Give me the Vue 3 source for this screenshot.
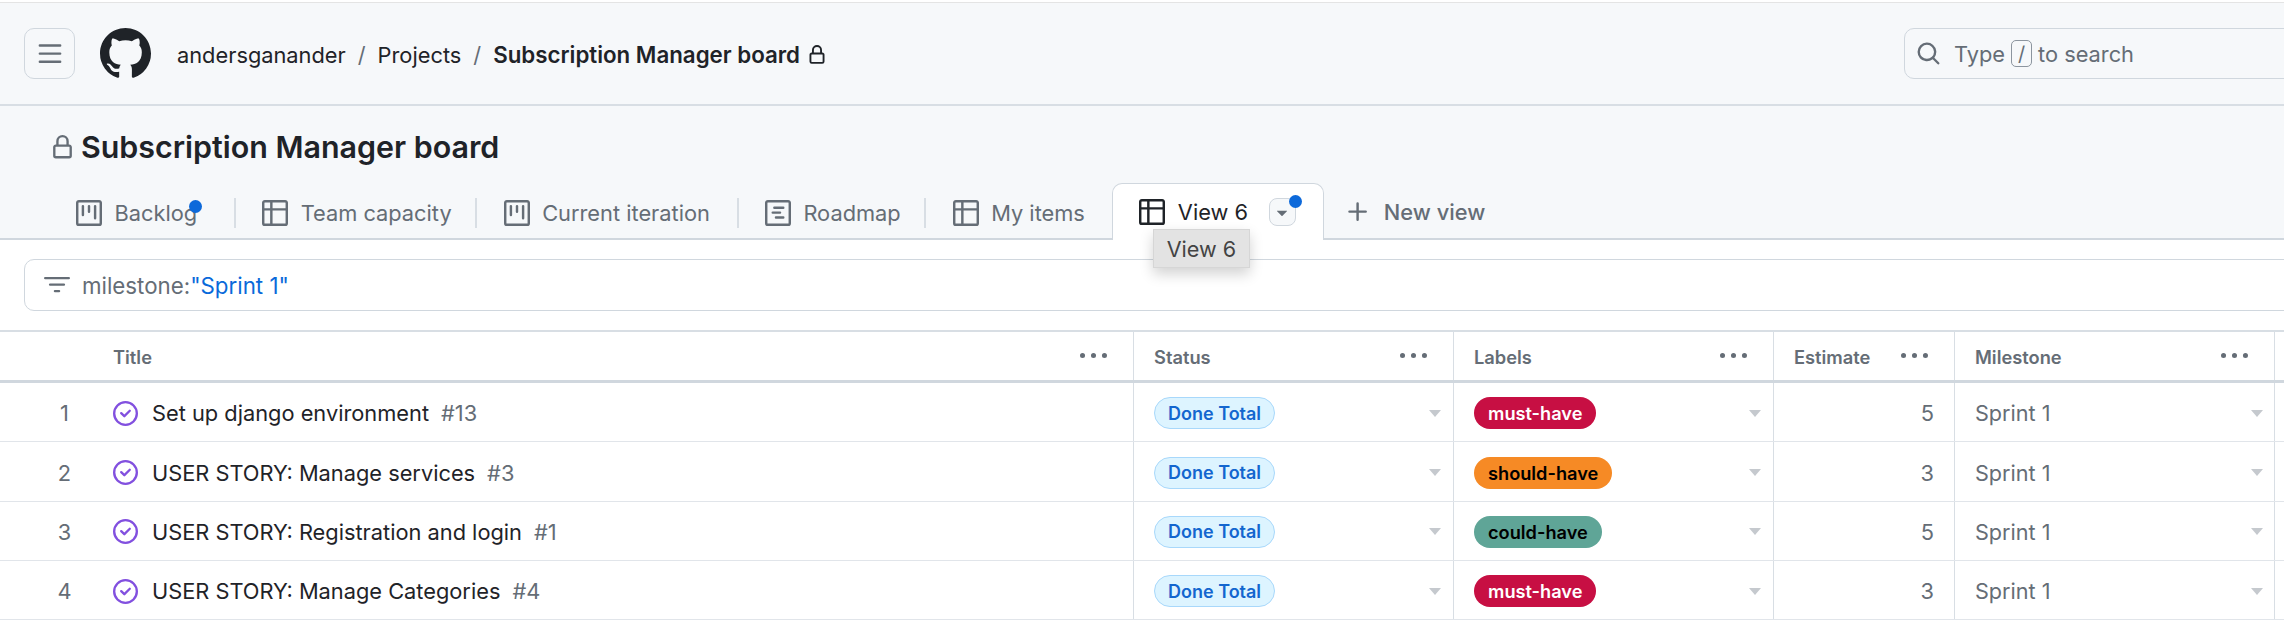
<template>
  <div class="page">
    <header class="topbar">
      <button class="menu-btn">
        <svg class="menu-icon" viewBox="0 0 16 16"><path :d="icons.bars" /></svg>
      </button>
      <svg class="logo" viewBox="0 0 16 16"><path :d="icons.github" /></svg>
      <nav class="crumbs">
        <span class="crumb-user">andersganander</span>
        <span class="slash">/</span>
        <span class="crumb-projects">Projects</span>
        <span class="slash">/</span>
        <strong class="crumb-board">Subscription Manager board</strong>
        <svg class="crumb-lock" viewBox="0 0 16 16"><path :d="icons.lock" /></svg>
      </nav>
      <div class="search">
        <svg class="search-icon" viewBox="0 0 16 16"><path :d="icons.search" /></svg>
        <span>Type</span>
        <kbd class="slash-key">/</kbd>
        <span>to search</span>
      </div>
    </header>

    <section class="project-head">
      <h1 class="project-title">
        <svg class="title-lock" viewBox="0 0 16 16"><path :d="icons.lock" /></svg>
        Subscription Manager board
      </h1>
      <div class="tabs">
        <div v-for="tab in tabs" :key="tab.name" class="tab" :class="{ dotted: tab.dot }">
          <svg class="tab-icon" viewBox="0 0 16 16"><path :d="icons[tab.icon]" /></svg>
          <span>{{ tab.name }}</span>
          <i v-if="tab.dot" class="dot backlog-dot"></i>
        </div>
        <div class="tab-active">
          <svg class="tab-icon" viewBox="0 0 16 16"><path :d="icons.table" /></svg>
          <span>View 6</span>
          <span class="view-menu">
            <svg class="view-caret" viewBox="0 0 16 16"><path :d="icons.caret" /></svg>
            <i class="dot menu-dot"></i>
          </span>
          <div class="tooltip">View 6</div>
        </div>
        <div class="new-view">
          <svg class="plus" viewBox="0 0 16 16"><path :d="icons.plus" /></svg>
          <span>New view</span>
        </div>
      </div>
    </section>

    <div class="filter-wrap">
      <div class="filter">
        <svg class="filter-icon" viewBox="0 0 16 16"><path :d="icons.filter" /></svg>
        <span>milestone:<b class="filter-value">"Sprint 1"</b></span>
      </div>
    </div>

    <div class="table">
      <div class="row head-row">
        <div v-for="col in columns" :key="col.name" class="cell head-cell" :class="col.cls">
          <span>{{ col.name }}</span>
          <svg class="kebab" viewBox="0 0 16 16"><path :d="icons.kebab" /></svg>
        </div>
        <div class="cell tail"></div>
      </div>
      <div v-for="(item, i) in items" :key="item.id" class="row">
        <div class="cell title-cell">
          <span class="num">{{ i + 1 }}</span>
          <svg class="issue-icon" viewBox="0 0 16 16"><path :d="icons.closedA" /><path :d="icons.closedB" /></svg>
          <span class="issue-title">{{ item.title }}</span>
          <span class="issue-id">#{{ item.id }}</span>
        </div>
        <div class="cell">
          <span class="pill status">Done Total</span>
          <svg class="caret" viewBox="0 0 12 7"><path d="M0 0h12L6 7z" /></svg>
        </div>
        <div class="cell">
          <span class="pill" :class="item.label">{{ item.label }}</span>
          <svg class="caret" viewBox="0 0 12 7"><path d="M0 0h12L6 7z" /></svg>
        </div>
        <div class="cell estimate">{{ item.estimate }}</div>
        <div class="cell milestone">
          <span>Sprint 1</span>
          <svg class="caret" viewBox="0 0 12 7"><path d="M0 0h12L6 7z" /></svg>
        </div>
        <div class="cell tail"></div>
      </div>
    </div>
  </div>
</template>

<script setup>
const icons = {
  bars: 'M1 2.75A.75.75 0 0 1 1.75 2h12.5a.75.75 0 0 1 0 1.5H1.75A.75.75 0 0 1 1 2.75Zm0 5A.75.75 0 0 1 1.75 7h12.5a.75.75 0 0 1 0 1.5H1.75A.75.75 0 0 1 1 7.75ZM1.75 12h12.5a.75.75 0 0 1 0 1.5H1.75a.75.75 0 0 1 0-1.5Z',
  github: 'M8 0c4.42 0 8 3.58 8 8a8.013 8.013 0 0 1-5.45 7.59c-.4.08-.55-.17-.55-.38 0-.27.01-1.13.01-2.2 0-.75-.25-1.23-.54-1.48 1.78-.2 3.65-.88 3.65-3.95 0-.88-.31-1.59-.82-2.15.08-.2.36-1.02-.08-2.12 0 0-.67-.22-2.2.82-.64-.18-1.32-.27-2-.27-.68 0-1.36.09-2 .27-1.53-1.03-2.2-.82-2.2-.82-.44 1.1-.16 1.92-.08 2.12-.51.56-.82 1.28-.82 2.15 0 3.06 1.86 3.75 3.64 3.95-.23.2-.44.55-.51 1.07-.46.21-1.61.55-2.33-.66-.15-.24-.6-.83-1.23-.82-.67.01-.27.38.01.53.34.19.73.9.82 1.13.16.45.68 1.31 2.69.94 0 .67.01 1.3.01 1.49 0 .21-.15.45-.55.38A7.995 7.995 0 0 1 0 8c0-4.42 3.58-8 8-8Z',
  lock: 'M4 4a4 4 0 0 1 8 0v2h.25c.966 0 1.75.784 1.75 1.75v5.5A1.75 1.75 0 0 1 12.25 15h-8.5A1.75 1.75 0 0 1 2 13.25v-5.5C2 6.784 2.784 6 3.75 6H4Zm8.25 3.5h-8.5a.25.25 0 0 0-.25.25v5.5c0 .138.112.25.25.25h8.5a.25.25 0 0 0 .25-.25v-5.5a.25.25 0 0 0-.25-.25ZM10.5 6V4a2.5 2.5 0 1 0-5 0v2Z',
  search: 'M10.68 11.74a6 6 0 0 1-7.922-8.982 6 6 0 0 1 8.982 7.922l3.04 3.04a.749.749 0 0 1-.326 1.275.749.749 0 0 1-.734-.215ZM11.5 7a4.499 4.499 0 1 0-8.997 0A4.499 4.499 0 0 0 11.5 7Z',
  board: 'M1.75 0h12.5C15.216 0 16 .784 16 1.75v12.5A1.75 1.75 0 0 1 14.25 16H1.75A1.75 1.75 0 0 1 0 14.25V1.75C0 .784.784 0 1.75 0ZM1.5 1.75v12.5c0 .138.112.25.25.25h12.5a.25.25 0 0 0 .25-.25V1.75a.25.25 0 0 0-.25-.25H1.75a.25.25 0 0 0-.25.25ZM11.75 3a.75.75 0 0 1 .75.75v7.5a.75.75 0 0 1-1.5 0v-7.5a.75.75 0 0 1 .75-.75Zm-8.25.75a.75.75 0 0 1 1.5 0v5.5a.75.75 0 0 1-1.5 0ZM8 3a.75.75 0 0 1 .75.75v3.5a.75.75 0 0 1-1.5 0v-3.5A.75.75 0 0 1 8 3Z',
  table: 'M0 1.75C0 .784.784 0 1.75 0h12.5C15.216 0 16 .784 16 1.75v12.5A1.75 1.75 0 0 1 14.25 16H1.75A1.75 1.75 0 0 1 0 14.25ZM6.5 6.5v8h7.75a.25.25 0 0 0 .25-.25V6.5Zm8-1.5V1.75a.25.25 0 0 0-.25-.25H6.5V5Zm-13 1.5v7.75c0 .138.112.25.25.25H5v-8ZM5 5V1.5H1.75a.25.25 0 0 0-.25.25V5Z',
  roadmap: 'M4.75 7a.75.75 0 0 0 0 1.5h4.5a.75.75 0 0 0 0-1.5h-4.5ZM5 4.75A.75.75 0 0 1 5.75 4h5.5a.75.75 0 0 1 0 1.5h-5.5A.75.75 0 0 1 5 4.75ZM6.75 10a.75.75 0 0 0 0 1.5h4.5a.75.75 0 0 0 0-1.5h-4.5ZM0 1.75C0 .784.784 0 1.75 0h12.5C15.216 0 16 .784 16 1.75v12.5A1.75 1.75 0 0 1 14.25 16H1.75A1.75 1.75 0 0 1 0 14.25ZM1.75 1.5a.25.25 0 0 0-.25.25v12.5c0 .138.112.25.25.25h12.5a.25.25 0 0 0 .25-.25V1.75a.25.25 0 0 0-.25-.25Z',
  plus: 'M7.75 2a.75.75 0 0 1 .75.75V7h4.25a.75.75 0 0 1 0 1.5H8.5v4.25a.75.75 0 0 1-1.5 0V8.5H2.75a.75.75 0 0 1 0-1.5H7V2.75A.75.75 0 0 1 7.75 2Z',
  filter: 'M.75 3h14.5a.75.75 0 0 1 0 1.5H.75a.75.75 0 0 1 0-1.5ZM3 7.75A.75.75 0 0 1 3.75 7h8.5a.75.75 0 0 1 0 1.5h-8.5A.75.75 0 0 1 3 7.75Zm3 4a.75.75 0 0 1 .75-.75h2.5a.75.75 0 0 1 0 1.5h-2.5a.75.75 0 0 1-.75-.75Z',
  closedA: 'M11.28 6.78a.75.75 0 0 0-1.06-1.06L7.25 8.69 5.78 7.22a.75.75 0 0 0-1.06 1.06l2 2a.75.75 0 0 0 1.06 0l3.5-3.5Z',
  closedB: 'M16 8A8 8 0 1 1 0 8a8 8 0 0 1 16 0Zm-1.5 0a6.5 6.5 0 1 0-13 0 6.5 6.5 0 0 0 13 0Z',
  caret: 'm4.427 7.427 3.396 3.396a.25.25 0 0 0 .354 0l3.396-3.396A.25.25 0 0 0 11.396 7H4.604a.25.25 0 0 0-.177.427Z',
  kebab: 'M8 9.5a1.5 1.5 0 1 0 0-3 1.5 1.5 0 0 0 0 3ZM1.5 9.5a1.5 1.5 0 1 0 0-3 1.5 1.5 0 0 0 0 3Zm13 0a1.5 1.5 0 1 0 0-3 1.5 1.5 0 0 0 0 3Z',
}

const tabs = [
  { name: 'Backlog', icon: 'board', dot: true },
  { name: 'Team capacity', icon: 'table' },
  { name: 'Current iteration', icon: 'board' },
  { name: 'Roadmap', icon: 'roadmap' },
  { name: 'My items', icon: 'table' },
]

const columns = [
  { name: 'Title', cls: 'title-head' },
  { name: 'Status' },
  { name: 'Labels' },
  { name: 'Estimate' },
  { name: 'Milestone' },
]

const items = [
  { id: 13, title: 'Set up django environment', label: 'must-have', estimate: 5 },
  { id: 3, title: 'USER STORY: Manage services', label: 'should-have', estimate: 3 },
  { id: 1, title: 'USER STORY: Registration and login', label: 'could-have', estimate: 5 },
  { id: 4, title: 'USER STORY: Manage Categories', label: 'must-have', estimate: 3 },
]
</script>

<style>
html,
body {
  background: #fff;
  overflow: hidden;
}
</style>

<style scoped>
.page {
  width: 2284px;
  height: 626px;
  overflow: hidden;
  font-family: Inter, "Noto Sans", sans-serif;
  color: #1f2328;
  background: #fff;
}

svg {
  display: block;
  fill: currentColor;
  flex: none;
}

.topbar {
  display: flex;
  align-items: center;
  height: 104px;
  margin-top: 2px;
  padding-left: 24px;
  box-sizing: border-box;
  background: #f6f8fa;
  border-top: 1.5px solid #e4e4e4;
  border-bottom: 2px solid #d8dee4;
}

.menu-btn {
  display: flex;
  align-items: center;
  justify-content: center;
  width: 51px;
  height: 51px;
  padding: 0;
  background: transparent;
  color: #656d76;
  border: 1.5px solid #d0d7de;
  border-radius: 10px;
}

.menu-icon {
  width: 26px;
  height: 26px;
}

.logo {
  width: 51px;
  height: 51px;
  margin-left: 25px;
  color: #1f2328;
}

.crumbs {
  display: flex;
  align-items: center;
  margin-left: 26px;
  padding-top: 2px;
  font-size: 21.8px;
  flex: 1;
}

.slash {
  margin: 0 12px;
  color: #656d76;
}

.crumb-board {
  font-size: 22.3px;
  font-weight: 600;
}

.crumb-lock {
  width: 20px;
  height: 20px;
  margin-left: 7px;
  color: #1f2328;
}

.search {
  display: flex;
  align-items: center;
  width: 400px;
  height: 51px;
  margin-right: -20px;
  padding-left: 11px;
  box-sizing: border-box;
  font-size: 21.8px;
  color: #656d76;
  border: 1.5px solid #d0d7de;
  border-radius: 10px;
}

.search-icon {
  width: 25px;
  height: 25px;
  margin-right: 13px;
}

.slash-key {
  display: flex;
  align-items: center;
  justify-content: center;
  width: 19px;
  height: 25px;
  margin: 0 6px;
  font: inherit;
  font-size: 20px;
  border: 1px solid #8c959f;
  border-radius: 5px;
}

.project-head {
  height: 134px;
  box-sizing: border-box;
  background: #f6f8fa;
  border-bottom: 2px solid #d0d7de;
}

.project-title {
  display: flex;
  align-items: center;
  margin: 0;
  height: 82px;
  padding-left: 50px;
  font-size: 30.4px;
  font-weight: 600;
  line-height: 1;
}

.title-lock {
  width: 25px;
  height: 25px;
  margin-right: 6px;
  color: #656d76;
}

.tabs {
  display: flex;
  align-items: flex-end;
  height: 50px;
  padding-left: 49px;
  font-size: 21.8px;
  color: #656d76;
}

.tab {
  position: relative;
  display: flex;
  align-items: center;
  gap: 12.5px;
  height: 30px;
  margin-bottom: 10px;
  padding: 0 27px;
  border-right: 2px solid #d8dee4;
}

.tab:nth-child(2),
.tab:nth-child(4) {
  padding-left: 26px;
  padding-right: 23px;
}

.tab:nth-child(5) {
  border-right: 0;
}

.tab.dotted {
  padding-right: 37px;
}

.tab-icon {
  width: 26px;
  height: 26px;
}

.dot {
  position: absolute;
  width: 13px;
  height: 13px;
  border-radius: 50%;
  background: #0d69da;
}

.backlog-dot {
  left: 140px;
  top: 2px;
}

.tab-active {
  position: relative;
  display: flex;
  align-items: center;
  gap: 13px;
  width: 212px;
  height: 57px;
  margin-bottom: -2px;
  padding: 0 0 0 26px;
  box-sizing: border-box;
  color: #1f2328;
  background: #fff;
  border: 1.5px solid #d0d7de;
  border-bottom: 0;
  border-radius: 10px 10px 0 0;
}

.view-menu {
  position: relative;
  display: flex;
  align-items: center;
  justify-content: center;
  width: 27px;
  height: 28px;
  margin-left: 8px;
  color: #656d76;
  background: #f6f8fa;
  border: 1.5px solid #d0d7de;
  box-sizing: border-box;
  border-radius: 8px;
}

.view-caret {
  width: 22px;
  height: 22px;
  flex: none;
}

.menu-dot {
  right: -7.5px;
  top: -4px;
}

.tooltip {
  position: absolute;
  left: 40px;
  top: 45px;
  z-index: 2;
  width: 97px;
  height: 39px;
  line-height: 38px;
  text-align: center;
  font-size: 21.6px;
  color: #434343;
  background: #e3e3e3;
  border: 1px solid #d6d6d6;
  box-sizing: border-box;
  box-shadow: 0 6px 14px rgba(0, 0, 0, 0.18);
}

.new-view {
  display: flex;
  align-items: center;
  gap: 13px;
  height: 30px;
  margin: 0 0 11px 21px;
  font-weight: 500;
}

.plus {
  width: 26px;
  height: 26px;
}

.filter-wrap {
  height: 90px;
  padding: 19px 0 0 24px;
  box-sizing: border-box;
}

.filter {
  display: flex;
  align-items: center;
  gap: 12px;
  width: 2400px;
  height: 52px;
  padding-left: 19px;
  box-sizing: border-box;
  font-size: 22.3px;
  color: #656d76;
  background: #fff;
  border: 1.5px solid #d0d7de;
  border-radius: 10px;
}

.filter-icon {
  width: 26px;
  height: 26px;
}

.filter-value {
  font-weight: 400;
  color: #0969da;
}

.table {
  border-top: 2px solid #d8dee4;
}

.row {
  display: grid;
  grid-template-columns: 1134px 320px 320px 181px 320px 1fr;
  height: 59.25px;
  box-sizing: border-box;
  border-bottom: 1.5px solid #e1e5ea;
}

.head-row {
  height: 51px;
  border-bottom: 3px solid #d0d7de;
}

.cell {
  display: flex;
  align-items: center;
  justify-content: space-between;
  min-width: 0;
  padding: 2.5px 20px 0;
  box-sizing: border-box;
  border-right: 1.5px solid #d8dee4;
}

.cell.tail {
  border-right: 0;
}

.head-cell {
  padding-top: 1px;
  padding-right: 26px;
  font-size: 18.3px;
  font-weight: 600;
  color: #656d76;
}

.title-head {
  padding-left: 113px;
}

.kebab {
  width: 27px;
  height: 27px;
  margin-top: -3px;
  color: #656d76;
}

.title-cell {
  justify-content: flex-start;
  padding: 2.5px 0 0;
  font-size: 21.8px;
}

.num {
  width: 113px;
  padding-left: 16px;
  box-sizing: border-box;
  text-align: center;
  color: #656d76;
}

.issue-icon {
  width: 25px;
  height: 25px;
  margin-right: 14px;
  color: #8250df;
}

.issue-title {
  margin-right: 12px;
}

.issue-id {
  color: #656d76;
}

.pill {
  display: inline-flex;
  align-items: center;
  height: 32px;
  padding: 0 14px;
  box-sizing: border-box;
  border-radius: 16px;
  font-size: 18.2px;
  font-weight: 600;
  white-space: nowrap;
}

.status {
  padding: 0 13px;
  font-size: 18px;
  color: #1366cf;
  background: #ddf4ff;
  border: 1px solid #a8d8fb;
}

.must-have {
  color: #fff;
  background: #c70f43;
}

.should-have {
  color: #000;
  background: #f68a25;
}

.could-have {
  color: #000;
  background: #5fa597;
}

.caret {
  width: 12px;
  height: 7px;
  margin-right: -7.5px;
  color: #c5c9ce;
}

.estimate {
  justify-content: flex-end;
  font-size: 21.8px;
  color: #656d76;
}

.milestone {
  font-size: 21.6px;
  color: #656d76;
}

.milestone .caret {
  margin-right: -8.5px;
}
</style>
